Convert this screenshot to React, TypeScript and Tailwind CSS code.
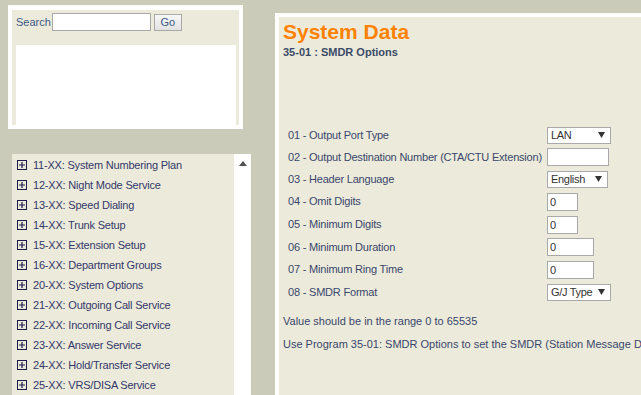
import React from 'react';

const groups = [
  '11-XX: System Numbering Plan',
  '12-XX: Night Mode Service',
  '13-XX: Speed Dialing',
  '14-XX: Trunk Setup',
  '15-XX: Extension Setup',
  '16-XX: Department Groups',
  '20-XX: System Options',
  '21-XX: Outgoing Call Service',
  '22-XX: Incoming Call Service',
  '23-XX: Answer Service',
  '24-XX: Hold/Transfer Service',
  '25-XX: VRS/DISA Service',
];

type Row = { label: string; kind: 'select' | 'input'; value: string; w: string; h: string };

const rows: Row[] = [
  { label: '01 - Output Port Type', kind: 'select', value: 'LAN', w: 'w-[64px]', h: 'h-[22px]' },
  { label: '02 - Output Destination Number (CTA/CTU Extension)', kind: 'input', value: '', w: 'w-[62px]', h: 'h-[22px]' },
  { label: '03 - Header Language', kind: 'select', value: 'English', w: 'w-[61px]', h: 'h-[22px]' },
  { label: '04 - Omit Digits', kind: 'input', value: '0', w: 'w-[31px]', h: 'h-[23px]' },
  { label: '05 - Minimum Digits', kind: 'input', value: '0', w: 'w-[31px]', h: 'h-[23px]' },
  { label: '06 - Minimum Duration', kind: 'input', value: '0', w: 'w-[47px]', h: 'h-[22px]' },
  { label: '07 - Minimum Ring Time', kind: 'input', value: '0', w: 'w-[47px]', h: 'h-[23px]' },
  { label: '08 - SMDR Format', kind: 'select', value: 'G/J Type', w: 'w-[64px]', h: 'h-[22px]' },
];

function PlusBox() {
  return (
    <svg width="10" height="10" viewBox="0 0 10 10" className="shrink-0">
      <rect x="0.5" y="0.5" width="9" height="9" fill="none" stroke="#1c1c4c" />
      <path d="M2 5h6M5 2v6" stroke="#1c1c4c" strokeWidth="1.2" />
    </svg>
  );
}

function FakeSelect({ value, w }: { value: string; w: string }) {
  return (
    <div className={`${w} h-[17px] bg-white border border-[#a9a9a9] flex items-center justify-between pl-[3px] pr-[5px] text-[11px] tracking-[-0.3px] text-[#333] whitespace-nowrap`}>
      <span>{value}</span>
      <svg width="7" height="6" viewBox="0 0 7 6" className="shrink-0">
        <path d="M0 0h7L3.5 6z" fill="#333" />
      </svg>
    </div>
  );
}

export default function App() {
  return (
    <div
      className="w-[641px] h-[395px] overflow-hidden bg-[#cbcbb9] flex"
      style={{ fontFamily: '"Liberation Sans", Arial, sans-serif' }}
    >
      {/* Left column */}
      <div className="w-[251px] shrink-0 flex flex-col pl-2">
        <div className="mt-[5px] w-[235px] h-[128px] border-4 border-t-[5px] border-white bg-[#ecebdb] px-1 pt-[3px] flex flex-col">
          <div className="flex items-center h-[18px] text-[11px] text-[#3c5a86]">
            <span className="mr-[1px]">Search</span>
            <div className="w-[99px] h-[18px] bg-white border border-[#a9a9a9]" />
            <div className="ml-[3px] w-[28px] h-[17px] border border-[#a9a9a9] bg-gradient-to-b from-[#f8f8f8] to-[#e2e2e2] flex items-center justify-center">
              Go
            </div>
          </div>
          <div className="mt-[14px] w-[220px] h-[80px] bg-white" />
        </div>

        <div className="mt-[25px] ml-1 flex flex-1">
          <div className="w-[222px] bg-[#ecebdb] flex flex-col pl-[5px] pt-[1px]">
            {groups.map(g => (
              <div key={g} className="h-[20px] flex items-center gap-[6px] text-[11px] tracking-[-0.2px] text-[#33386a] whitespace-nowrap">
                <PlusBox />
                <span>{g}</span>
              </div>
            ))}
          </div>
          <div className="w-[17px] bg-white flex justify-center pt-[7px]">
            <svg width="8" height="5" viewBox="0 0 8 5">
              <path d="M0 5L4 0L8 5z" fill="#505050" />
            </svg>
          </div>
        </div>
      </div>

      {/* Right panel */}
      <div className="ml-6 mt-[13px] flex-1 border-l-4 border-t-4 border-white bg-[#ecebdb] pl-1 min-w-[366px] overflow-hidden">
        <div className="mt-[2px] text-[21px] font-bold leading-[26px] text-[#ff8200]">System Data</div>
        <div className="mt-[1px] text-[11px] font-bold leading-[12px] text-[#3a4a68]">35-01 : SMDR Options</div>

        <div className="mt-[66px] pl-[5px] flex flex-col">
          {rows.map(r => (
            <div key={r.label} className={`${r.h} flex items-center`}>
              <div className="w-[259px] shrink-0 text-[11px] tracking-[-0.2px] text-[#3a466b] whitespace-nowrap">{r.label}</div>
              {r.kind === 'select' ? (
                <FakeSelect value={r.value} w={r.w} />
              ) : (
                <div className={`${r.w} h-[18px] bg-white border border-[#a9a9a9] pl-[2px] text-[11px] leading-[16px] text-[#333]`}>
                  {r.value}
                </div>
              )}
            </div>
          ))}
        </div>

        <div className="mt-[10px] text-[11px] text-[#3a466b]">Value should be in the range 0 to 65535</div>
        <div className="mt-[6px] text-[11px] text-[#3a466b] whitespace-nowrap">
          Use Program 35-01: SMDR Options to set the SMDR (Station Message Detail Recording) options.
        </div>
      </div>
    </div>
  );
}
